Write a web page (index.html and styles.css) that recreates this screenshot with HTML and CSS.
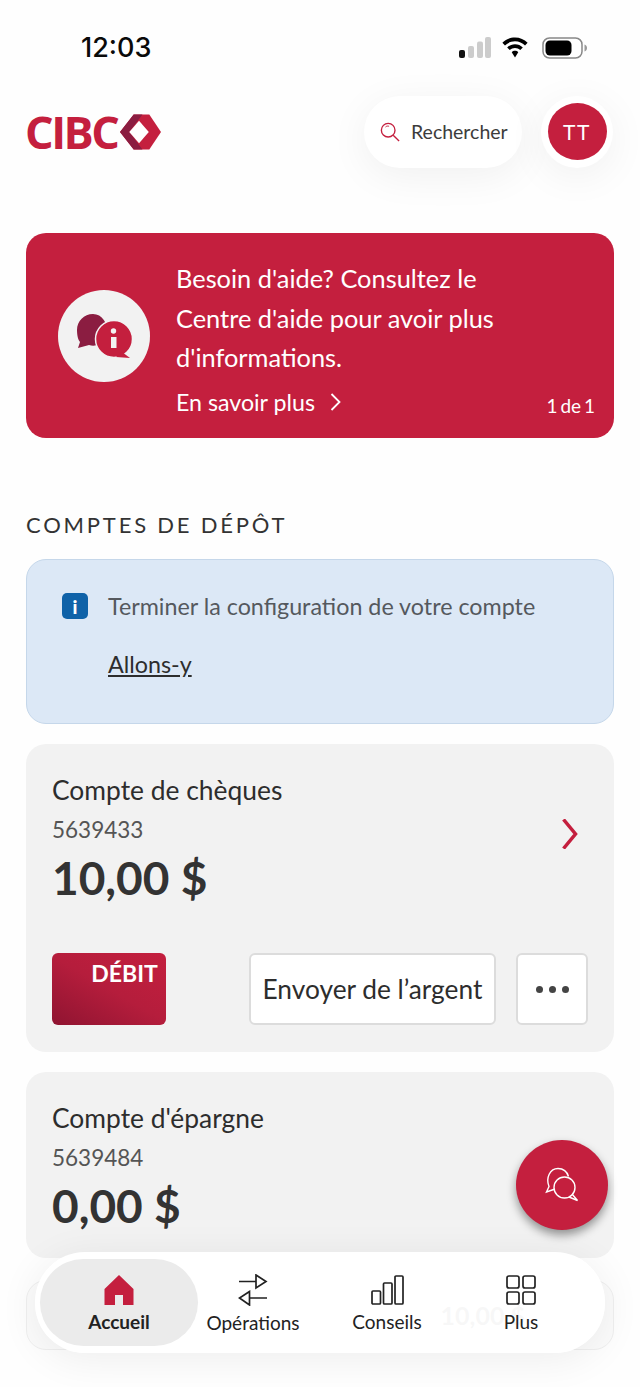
FILE: index.html
```html
<!DOCTYPE html>
<html lang="fr">

<head>
    <meta charset="UTF-8">
    <meta name="viewport" content="width=device-width, initial-scale=1.0">
    <title>CIBC</title>
    <link rel="stylesheet" href="styles.css">
</head>

<body>
    <div class="phone">
        <div class="status-bar">
            <span class="time">12:03</span>
            <div class="status-icons">
                <svg class="signal" width="32" height="21" viewBox="0 0 32 21">
                    <rect x="0" y="13" width="6" height="8" rx="2" fill="#111"/>
                    <rect x="9" y="9" width="6" height="12" rx="2" fill="#ccc"/>
                    <rect x="18" y="4.500" width="6" height="16.500" rx="2" fill="#ccc"/>
                    <rect x="26" y="0" width="6" height="21" rx="2" fill="#ccc"/>
                </svg>
                <svg width="28" height="21" viewBox="0 0 28 22">
                    <path d="M14 0.500C8.800 0.500 4.200 2.600 0.800 6L3.500 8.800C6.200 6.100 9.900 4.400 14 4.400S21.800 6.100 24.500 8.800L27.200 6C23.800 2.600 19.200 0.500 14 0.500Z" fill="#000"/>
                    <path d="M14 7.500C10.800 7.500 7.900 8.800 5.800 10.900L8.500 13.700C9.900 12.300 11.900 11.400 14 11.400S18.100 12.300 19.500 13.700L22.200 10.900C20.100 8.800 17.200 7.500 14 7.500Z" fill="#000"/>
                    <path d="M14 14.500C12.700 14.500 11.500 15 10.600 15.900L14 21.500L17.400 15.900C16.500 15 15.300 14.500 14 14.500Z" fill="#000"/>
                </svg>
                <svg width="46" height="22" viewBox="0 0 46 22">
                    <rect x="1" y="1" width="39" height="20" rx="6.500" fill="none" stroke="#888" stroke-width="1.500"/>
                    <rect x="3.500" y="3.500" width="26" height="15" rx="4.500" fill="#000"/>
                    <path d="M42.500 7.500C44 8 45 9.300 45 11S44 14 42.500 14.500Z" fill="#999"/>
                </svg>
            </div>
        </div>

        <div class="top-bar">
            <div class="logo">
                <span class="logo-text">CIBC</span>
                <svg width="41" height="36" viewBox="0 0 42 36">
                    <path d="M14 0H30L42 18L30 36H14L0 18Z" fill="#c41f3e"/>
                    <path d="M0 18L14 0H23L9.500 18L23 36H14Z" fill="#8b1d41"/>
                    <path d="M9.500 18L19.500 6.500L29.500 18L19.500 29.500Z" fill="#fff"/>
                </svg>
            </div>
            <div class="top-actions">
                <div class="search-pill">
                    <svg width="20" height="20" viewBox="0 0 22 22" fill="none" stroke="#c41f3e" stroke-width="1.500">
                        <circle cx="9" cy="9" r="7.500"/>
                        <path d="M14.500 14.500L21 21"/>
                        <path d="M6 5.500C7 4.500 8.500 4.200 10 4.700" stroke-width="1"/>
                    </svg>
                    <span>Rechercher</span>
                </div>
                <div class="avatar-ring">
                    <div class="avatar">TT</div>
                </div>
            </div>
        </div>

        <div class="content">
            <div class="promo">
                <div class="promo-icon">
                    <svg width="92" height="92" viewBox="0 0 92 92">
                        <path d="M35 24C26 24 19 31 19 40C19 45 20 50 22 52L20 58L31 55C37 57 44 55 50 45C50 33 44 24 35 24Z" fill="#8b1d41"/>
                        <circle cx="56" cy="49" r="18.500" fill="#c41f3e" stroke="#f2f2f2" stroke-width="1.500"/>
                        <path d="M64 62L72 68L58 67Z" fill="#c41f3e"/>
                        <circle cx="55.500" cy="41" r="2.700" fill="#f2f2f2"/>
                        <rect x="53" y="47" width="5.500" height="11" fill="#f2f2f2"/>
                    </svg>
                </div>
                <div class="promo-text">
                    <p>Besoin d'aide? Consultez le<br>Centre d'aide pour avoir plus<br>d'informations.</p>
                    <div class="promo-link">
                        <span>En savoir plus</span>
                        <svg width="11" height="18" viewBox="0 0 11 18" fill="none" stroke="#fff" stroke-width="1.800">
                            <path d="M1.500 1L9.500 9L1.500 17"/>
                        </svg>
                    </div>
                </div>
                <span class="promo-count">1 de 1</span>
            </div>

            <h2 class="section-title">COMPTES DE DÉPÔT</h2>

            <div class="notice">
                <div class="notice-row">
                    <div class="notice-icon">i</div>
                    <span>Terminer la configuration de votre compte</span>
                </div>
                <a class="notice-link" href="#">Allons-y</a>
            </div>

            <div class="account account-main">
                <div class="account-head">
                    <div>
                        <div class="account-name">Compte de chèques</div>
                        <div class="account-num">5639433</div>
                        <div class="account-bal">10,00 $</div>
                    </div>
                    <svg class="chevron" width="16" height="30" viewBox="0 0 16 30" fill="none" stroke="#c41f3e" stroke-width="3.500">
                        <path d="M1.500 0.500L13.500 15L1.500 29.500"/>
                    </svg>
                </div>
                <div class="account-actions">
                    <div class="debit-card">DÉBIT</div>
                    <button class="btn-send">Envoyer de l’argent</button>
                    <button class="btn-more"><i></i><i></i><i></i></button>
                </div>
            </div>

            <div class="account">
                <div class="account-name">Compte d'épargne</div>
                <div class="account-num">5639484</div>
                <div class="account-bal">0,00 $</div>
            </div>

            <div class="account-ghost">
                <span>10,00 $</span>
            </div>
        </div>

        <div class="fab">
            <svg width="36" height="36" viewBox="0 0 36 36" fill="none" stroke="#fff" stroke-width="1.400">
                <path d="M11 22L2.500 25L5 19.500C1.500 11 6 1.500 14 1.500C19 1.500 23 4.500 24.500 9.500"/>
                <circle cx="20.500" cy="20.500" r="10.500" fill="#c41f3e"/>
                <path d="M28 27L33.500 33.500L25 30"/>
            </svg>
        </div>

        <div class="tab-bar">
            <div class="tab active">
                <svg width="30" height="30" viewBox="0 0 30 30">
                    <path d="M15 0L29.500 14V30H19V20H11V30H0.500V14Z" fill="#c41f3e"/>
                </svg>
                <span>Accueil</span>
            </div>
            <div class="tab">
                <svg width="30" height="32" viewBox="0 0 30 32" fill="none" stroke="#222" stroke-width="1.700">
                    <path d="M1 7.500H18M18 1L28 7.500L18 14Z"/>
                    <path d="M29 24H11.500M11.500 17.500L1.500 24L11.500 31Z"/>
                </svg>
                <span>Opérations</span>
            </div>
            <div class="tab">
                <svg width="33" height="30" viewBox="0 0 33 30" fill="none" stroke="#222" stroke-width="1.700">
                    <rect x="1" y="16" width="8.500" height="13" rx="1"/>
                    <rect x="12.500" y="8" width="8.500" height="21" rx="1"/>
                    <rect x="24" y="1" width="8" height="28" rx="1"/>
                </svg>
                <span>Conseils</span>
            </div>
            <div class="tab">
                <svg width="30" height="30" viewBox="0 0 30 30" fill="none" stroke="#222" stroke-width="1.700">
                    <rect x="1" y="1" width="12" height="12" rx="2"/>
                    <rect x="17" y="1" width="12" height="12" rx="2"/>
                    <rect x="1" y="17" width="12" height="12" rx="2"/>
                    <rect x="17" y="17" width="12" height="12" rx="2"/>
                </svg>
                <span>Plus</span>
            </div>
        </div>
    </div>
</body>

</html>
```

FILE: styles.css
```css
* {
    margin: 0;
    padding: 0;
    box-sizing: border-box;
    font-family: Lato, "Open Sans", Arial, sans-serif;
}

body {
    background-color: #fff;
    color: #2d2d2d;
}

.phone {
    position: relative;
    width: 640px;
    height: 1387px;
    overflow: hidden;
    background-color: #fefefe;
}

.status-bar {
    height: 95px;
    display: flex;
    align-items: center;
    justify-content: space-between;
    padding: 0 52px 0 81px;
}

.time {
    font-family: Inter, Arial, sans-serif;
    font-size: 27px;
    font-weight: 500;
    color: #0a0a0a;
}

.status-icons {
    display: flex;
    align-items: center;
    gap: 13px;
}

.signal {
    margin-right: -3px;
}

.top-bar {
    height: 73px;
    display: flex;
    align-items: center;
    justify-content: space-between;
    padding: 0 27px 0 25px;
}

.logo {
    display: flex;
    align-items: center;
    gap: 3px;
}

.logo-text {
    font-family: "Open Sans", Arial, sans-serif;
    font-size: 45px;
    font-weight: 700;
    color: #c41f3e;
    letter-spacing: -2.500px;
    line-height: 1;
}

.top-actions {
    display: flex;
    align-items: center;
    gap: 19px;
}

.search-pill {
    width: 158px;
    height: 72px;
    background-color: #fff;
    border-radius: 36px;
    display: flex;
    align-items: center;
    gap: 11px;
    padding-left: 16px;
    font-size: 19.500px;
    color: #3c3c3c;
    box-shadow: 0 8px 40px rgba(0, 0, 0, 0.06);
}

.avatar-ring {
    width: 72px;
    height: 72px;
    background-color: #fff;
    border-radius: 50%;
    display: flex;
    align-items: center;
    justify-content: center;
    box-shadow: 0 8px 40px rgba(0, 0, 0, 0.06);
}

.avatar {
    width: 59px;
    height: 57px;
    border-radius: 50%;
    background-color: #c41f3e;
    color: #fff;
    font-size: 21px;
    letter-spacing: 1.500px;
    display: flex;
    align-items: center;
    justify-content: center;
}

.content {
    padding: 65px 26px 0;
}

.promo {
    position: relative;
    height: 205px;
    background-color: #c41f3e;
    border-radius: 20px;
    display: flex;
    align-items: center;
    padding-left: 32px;
    color: #fff;
}

.promo-icon {
    width: 92px;
    height: 92px;
    border-radius: 50%;
    background-color: #f2f2f2;
    flex-shrink: 0;
    margin-right: 26px;
}

.promo-text {
    padding-top: 4px;
}

.promo-text p {
    font-size: 25.400px;
    line-height: 39.500px;
}

.promo-link {
    display: flex;
    align-items: center;
    gap: 15px;
    font-size: 23.200px;
    margin-top: 10px;
}

.promo-count {
    position: absolute;
    right: 19px;
    bottom: 21px;
    font-size: 19px;
    word-spacing: -2px;
}

.section-title {
    font-size: 22px;
    font-weight: 400;
    letter-spacing: 2.800px;
    color: #333;
    margin: 72px 0 19px;
    line-height: 30px;
}

.notice {
    height: 165px;
    background-color: #dce8f6;
    border: 1px solid #c5d7ea;
    border-radius: 20px;
    padding: 32px 35px 0;
    font-size: 23.300px;
    color: #55595e;
}

.notice-row {
    display: flex;
    align-items: center;
    gap: 20px;
}

.notice-icon {
    width: 26px;
    height: 26px;
    border-radius: 5px;
    background-color: #0f62a8;
    color: #fff;
    font-size: 19px;
    font-weight: 900;
    display: flex;
    align-items: center;
    justify-content: center;
}

.notice-link {
    display: inline-block;
    margin: 30px 0 0 46px;
    color: #2d2d2d;
}

.account {
    background-color: #f2f2f2;
    border-radius: 20px;
    padding: 30px 26px 0;
    margin-top: 20px;
    height: 186px;
}

.account-main {
    height: 308px;
}

.account-head {
    display: flex;
    align-items: center;
    justify-content: space-between;
    padding-right: 10px;
}

.account-name {
    font-size: 26.400px;
    color: #2d2d2d;
    line-height: 32px;
}

.account-num {
    font-size: 22.500px;
    color: #555;
    line-height: 30px;
    margin-top: 9px;
}

.account-bal {
    font-size: 46px;
    font-weight: 700;
    color: #333;
    line-height: 56px;
    margin-top: 5px;
}

.chevron {
    margin-bottom: 12px;
}

.account-actions {
    display: flex;
    align-items: center;
    margin-top: 47px;
}

.debit-card {
    width: 114px;
    height: 72px;
    border-radius: 6px;
    background: linear-gradient(30deg, #8f1431 0%, #b51d3c 50%, #c41f3e 100%);
    color: #fff;
    font-size: 23px;
    font-weight: 700;
    text-align: right;
    padding: 6px 8px 0 0;
    margin-right: 83px;
}

.btn-send,
.btn-more {
    height: 72px;
    background-color: #fff;
    border: 2px solid #dcdcdc;
    border-radius: 6px;
}

.btn-send {
    width: 248px;
    font-size: 26.300px;
    color: #2d2d2d;
    margin-right: 20px;
}

.btn-more {
    width: 72px;
    display: flex;
    align-items: center;
    justify-content: center;
    gap: 6px;
}

.btn-more i {
    width: 7px;
    height: 7px;
    border-radius: 50%;
    background-color: #444;
}

.account-ghost {
    height: 70px;
    margin-top: 22px;
    border: 1px solid #efefef;
    border-radius: 20px;
    background-color: #fbfbfb;
    display: flex;
    align-items: center;
    justify-content: flex-end;
    padding-right: 88px;
}

.account-ghost span {
    font-size: 25px;
    font-weight: 700;
    color: #333;
}

.fab {
    position: absolute;
    left: 516px;
    top: 1140px;
    width: 92px;
    height: 90px;
    border-radius: 50%;
    background-color: #c41f3e;
    display: flex;
    align-items: center;
    justify-content: center;
    box-shadow: 0 5px 10px rgba(0, 0, 0, 0.4);
}

.tab-bar {
    position: absolute;
    left: 35px;
    top: 1252px;
    width: 570px;
    height: 101px;
    border-radius: 50px;
    background-color: rgba(255, 255, 255, 0.96);
    box-shadow: 0 6px 40px rgba(0, 0, 0, 0.07);
    display: flex;
    align-items: center;
    padding: 0 5px;
}

.tab {
    width: 134px;
    height: 87px;
    display: flex;
    flex-direction: column;
    align-items: center;
    justify-content: center;
    gap: 5px;
    padding-top: 2px;
    font-size: 19px;
    color: #222;
}

.tab.active {
    width: 158px;
    margin-right: -12px;
    background-color: #ebebeb;
    border-radius: 44px;
    font-weight: 700;
}
```
